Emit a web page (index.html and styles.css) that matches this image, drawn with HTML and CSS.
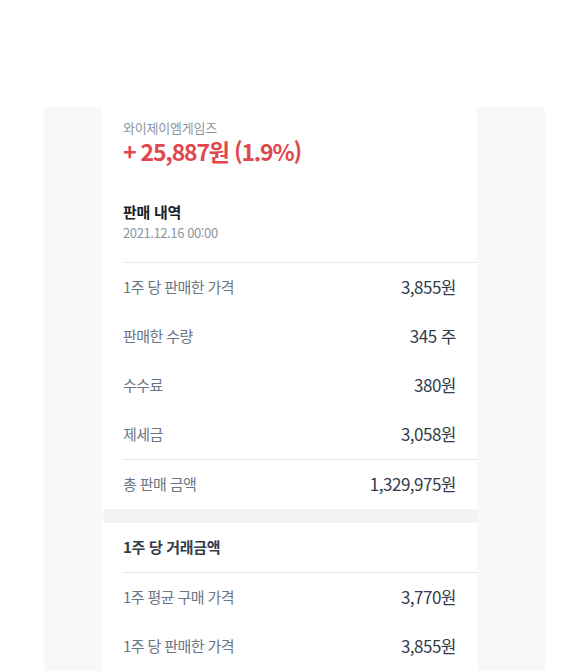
FILE: index.html
```html
<!DOCTYPE html>
<html lang="ko">
<head>
<meta charset="utf-8">
<link rel="stylesheet" href="styles.css">
</head>
<body>
<div class="page">
  <div class="backdrop">
    <div class="card">
      <section class="summary">
        <div class="stock-name">와이제이엠게임즈</div>
        <div class="profit">+ 25,887원 (1.9%)</div>
      </section>
      <section class="history">
        <div class="section-title">판매 내역</div>
        <div class="date">2021.12.16 00:00</div>
      </section>
      <div class="divider"></div>
      <div class="rows">
        <div class="row"><span class="label">1주 당 판매한 가격</span><span class="value">3,855원</span></div>
        <div class="row"><span class="label">판매한 수량</span><span class="value">345 주</span></div>
        <div class="row"><span class="label">수수료</span><span class="value">380원</span></div>
        <div class="row"><span class="label">제세금</span><span class="value">3,058원</span></div>
      </div>
      <div class="divider"></div>
      <div class="rows">
        <div class="row"><span class="label">총 판매 금액</span><span class="value">1,329,975원</span></div>
      </div>
      <div class="band"></div>
      <div class="sub-title">1주 당 거래금액</div>
      <div class="divider"></div>
      <div class="rows">
        <div class="row"><span class="label">1주 평균 구매 가격</span><span class="value">3,770원</span></div>
        <div class="row"><span class="label">1주 당 판매한 가격</span><span class="value">3,855원</span></div>
      </div>
    </div>
  </div>
</div>
</body>
</html>
```

FILE: styles.css
```css
html, body {
  margin: 0;
  padding: 0;
  background: #ffffff;
}
body {
  font-family: "Noto Sans CJK KR", "Noto Sans", sans-serif;
  -webkit-font-smoothing: antialiased;
}
.page {
  padding-top: 107px;
  height: 671px;
  box-sizing: border-box;
  overflow: hidden;
}
.backdrop {
  margin-left: 44px;
  width: 501px;
  height: 564px;
  background: #f8f8f8;
}
.card {
  margin-left: 58px;
  width: 375px;
  height: 100%;
  background: #ffffff;
  display: flex;
  flex-direction: column;
}
.summary {
  padding: 11px 21px 0;
}
.stock-name {
  font-size: 13px;
  line-height: 19px;
  color: #8b95a1;
  letter-spacing: -0.2px;
}
.profit {
  font-size: 23px;
  line-height: 28px;
  font-weight: 600;
  color: #e0474e;
  letter-spacing: -1.2px;
}
.history {
  padding: 36px 21px 0;
}
.section-title {
  font-size: 15px;
  line-height: 22px;
  font-weight: 700;
  color: #191f28;
  letter-spacing: -0.3px;
}
.date {
  font-size: 13px;
  line-height: 20px;
  color: #8b95a1;
  letter-spacing: -0.4px;
}
.divider {
  margin-left: 21px;
  height: 1px;
  background: #e8e8ea;
  flex: none;
}
.history + .divider {
  margin-top: 19px;
}
.rows {
  display: flex;
  flex-direction: column;
}
.row {
  display: flex;
  justify-content: space-between;
  align-items: center;
  box-sizing: border-box;
  height: 49px;
  padding: 0 21px 3px;
}
.label {
  font-size: 15px;
  color: #6b7684;
  letter-spacing: -0.6px;
}
.value {
  font-size: 17px;
  color: #333d4b;
  letter-spacing: -0.5px;
}
.band {
  margin-left: 1px;
  height: 14px;
  background: #f2f3f5;
  flex: none;
}
.sub-title {
  box-sizing: border-box;
  padding: 0 21px 3px;
  height: 49px;
  display: flex;
  align-items: center;
  font-size: 15px;
  font-weight: 700;
  color: #333d4b;
  letter-spacing: -0.3px;
}
```
